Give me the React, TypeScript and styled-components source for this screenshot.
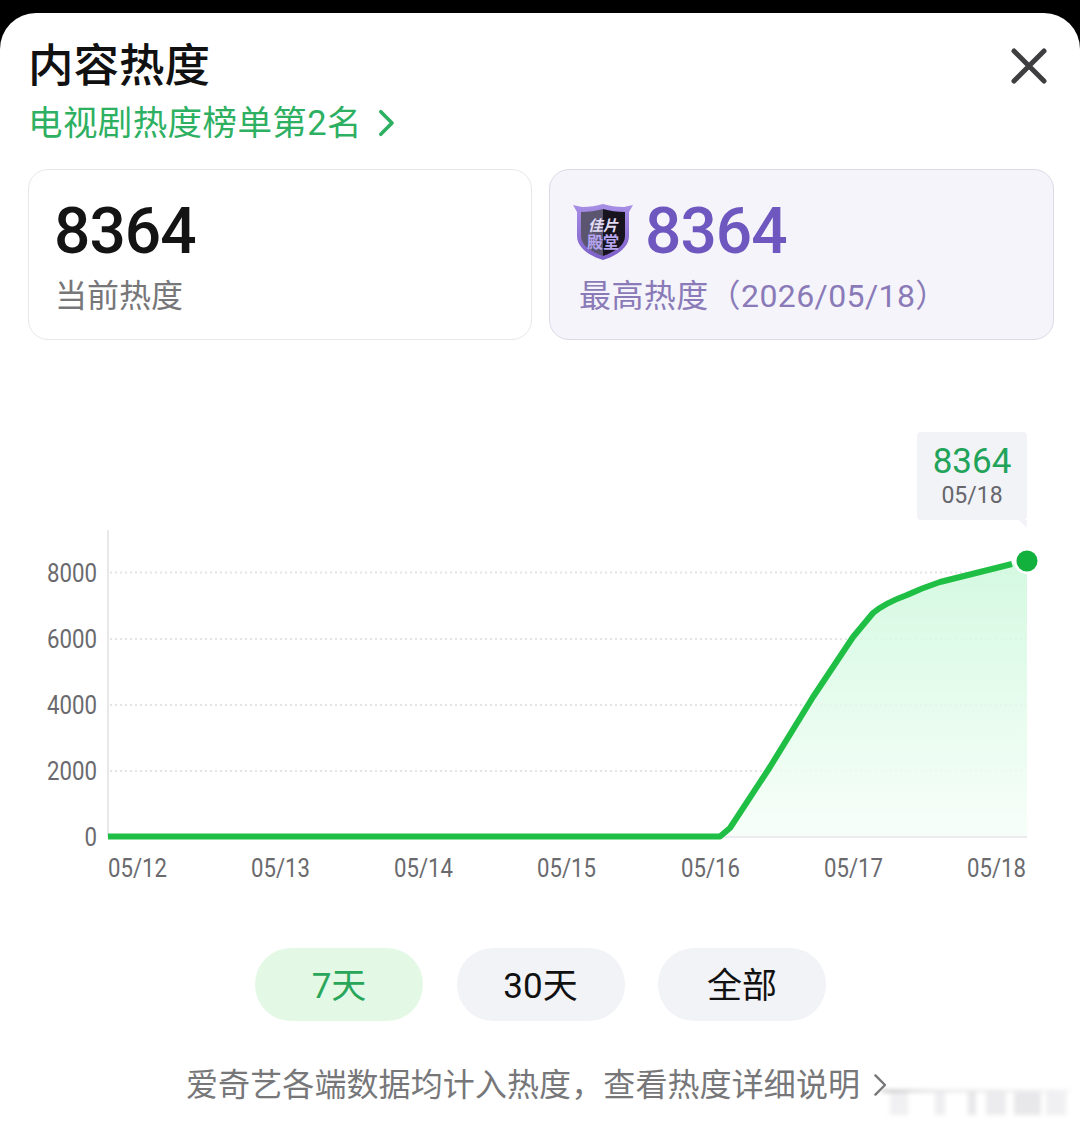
import React from 'react'
import styled, { createGlobalStyle } from 'styled-components'

const SANS = `Roboto, "Noto Sans CJK SC", "Noto Sans", sans-serif`

const GlobalStyle = createGlobalStyle`
    html, body {
        margin: 0;
        padding: 0;
        background: #000;
        font-family: ${SANS};
    }
`

const Page = styled.div`
    width: 1080px;
    height: 1127px;
    padding-top: 13px;
    box-sizing: border-box;
    overflow: hidden;
`

const Sheet = styled.div`
    position: relative;
    height: 1114px;
    background: #fff;
    border-radius: 36px 36px 0 0;
    box-sizing: border-box;
    padding-top: 23px;
`

const Header = styled.div`
    display: flex;
    justify-content: space-between;
    padding: 0 33px 0 28px;
`

const Title = styled.h1`
    margin: 0;
    font-size: 45.5px;
    line-height: 62px;
    font-weight: 500;
    color: #111;
`

const RankLink = styled.div`
    display: flex;
    align-items: center;
    gap: 16px;
    font-size: 34.5px;
    line-height: 48px;
    letter-spacing: 0.4px;
    margin-top: 1px;
    color: #2eb062;
`

const CloseButton = styled.div`
    margin-top: 12px;
    width: 36px;
    height: 36px;
`

const StatRow = styled.div`
    display: grid;
    grid-template-columns: 504px 505px;
    gap: 17px;
    margin: 22px 0 0 28px;
`

const StatCard = styled.div<{ $accent?: boolean }>`
    height: 171px;
    box-sizing: border-box;
    border-radius: 20px;
    border: 1.5px solid ${p => (p.$accent ? '#dcdae6' : '#e8e8ea')};
    background: ${p => (p.$accent ? '#f5f4fa' : '#fff')};
    padding: ${p => (p.$accent ? '29px 0 0 23px' : '29px 0 0 25px')};
`

const StatValue = styled.div<{ $accent?: boolean }>`
    display: flex;
    align-items: center;
    gap: 12px;
    height: 66px;
    font-size: 64px;
    line-height: 66px;
    font-weight: 500;
    letter-spacing: -1px;
    color: ${p => (p.$accent ? '#6f57c0' : '#141414')};
`

const StatLabel = styled.div<{ $accent?: boolean }>`
    margin: 9px 0 0 ${p => (p.$accent ? '6px' : '1px')};
    font-size: 32px;
    line-height: 44px;
    letter-spacing: ${p => (p.$accent ? '0.4px' : '0')};
    color: ${p => (p.$accent ? '#8a7bb8' : '#77777a')};
`

const ChartArea = styled.div`
    position: relative;
    margin-top: 80px;
    height: 470px;
`

const Tooltip = styled.div`
    position: absolute;
    left: 917px;
    top: 12px;
    width: 110px;
    height: 88px;
    background: #f2f3f7;
    border-radius: 4px;
    text-align: center;
    &::after {
        content: '';
        position: absolute;
        right: 0;
        bottom: -8px;
        border-top: 8px solid #f2f3f7;
        border-left: 8px solid transparent;
    }
`

const TooltipValue = styled.div`
    margin-top: 9px;
    font-size: 35px;
    line-height: 42px;
    color: #22a35a;
`

const TooltipDate = styled.div`
    font-size: 23px;
    line-height: 26px;
    color: #66666c;
`

const RangeRow = styled.div`
    display: flex;
    justify-content: center;
    gap: 33.5px;
    margin-top: 58px;
    padding-left: 1px;
`

const RangeButton = styled.div<{ $active?: boolean }>`
    width: 168px;
    height: 73px;
    box-sizing: border-box;
    padding-bottom: 4px;
    border-radius: 36px;
    display: flex;
    align-items: center;
    justify-content: center;
    font-size: 35px;
    color: ${p => (p.$active ? '#2aa65a' : '#111')};
    background: ${p => (p.$active ? '#e3f9e6' : '#f2f3f7')};
`

const Footnote = styled.div`
    display: flex;
    align-items: center;
    margin: 39px 0 0 186px;
    font-size: 32px;
    line-height: 50px;
    letter-spacing: 0.1px;
    color: #77777a;
    gap: 13px;
`

const Watermark = styled.div`
    position: absolute;
    left: 890px;
    top: 1077px;
    width: 180px;
    height: 25px;
    display: flex;
    align-items: stretch;
    filter: blur(2px);
`

const WatermarkBar = styled.span<{ $w: number; $gap: number; $shade: string }>`
    display: block;
    width: ${p => p.$w}px;
    margin-left: ${p => p.$gap}px;
    background: ${p => p.$shade};
`

const WatermarkStreak = styled.span`
    position: absolute;
    left: -8px;
    top: 0;
    width: 188px;
    height: 2px;
    background: linear-gradient(to right, #a8a8aa, #dcdcde 30%, #f0f0f2 100%);
`

const Chevron = ({ size, color, width }: { size: number; color: string; width: number }) => (
    <svg width={size * 0.6} height={size} viewBox="0 0 12 20" fill="none">
        <path d="M2 2l8 8-8 8" stroke={color} strokeWidth={width} strokeLinecap="round" strokeLinejoin="round" />
    </svg>
)

const HallBadge = () => (
    <svg width="60" height="58" viewBox="0 0 60 58">
        <defs>
            <linearGradient id="shieldRim" x1="0" y1="0" x2="0" y2="1">
                <stop offset="0" stopColor="#a88fe6" />
                <stop offset="1" stopColor="#7c5fc8" />
            </linearGradient>
        </defs>
        <path d="M0 2l9 2C17 4 23 3 30 1c7 2 13 3 21 3l9-2-4 7v24c0 12-13 20-26 24C17 53 4 45 4 33V9z" fill="url(#shieldRim)" />
        <path d="M8 9c8 0 15-1 22-3v47C19 49 8 43 8 33z" fill="#5b5570" />
        <path d="M30 6c7 2 14 3 22 3v24c0 10-11 16-22 20z" fill="#17141f" />
        <text x="30" y="28" textAnchor="middle" fontSize="15" fontWeight="700" fontStyle="italic" letterSpacing="0" fill="#e2dcf7">佳片</text>
        <text x="30" y="45" textAnchor="middle" fontSize="16" fontWeight="700" letterSpacing="0" fill="#b5a4ee">殿堂</text>
    </svg>
)

const Y_TICKS = [
    { label: '8000', y: 572.5 },
    { label: '6000', y: 639 },
    { label: '4000', y: 705 },
    { label: '2000', y: 771 },
    { label: '0', y: 837 },
]

const X_TICKS = [
    { label: '05/12', x: 108 },
    { label: '05/13', x: 251 },
    { label: '05/14', x: 394 },
    { label: '05/15', x: 537 },
    { label: '05/16', x: 681 },
    { label: '05/17', x: 824 },
    { label: '05/18', x: 967 },
]

const LINE =
    'M108 836.5L720 836.5L730 828L770 767L813 697L853 637L873 613Q885 603 907 595Q922 588 940 582L980 572L1012 564'

const HeatChart = () => (
    <svg width="1080" height="470" viewBox="0 420 1080 470" style={{ display: 'block' }}>
        <defs>
            <linearGradient id="areaFill" x1="0" y1="0" x2="0" y2="1">
                <stop offset="0" stopColor="#cdf8dc" />
                <stop offset="1" stopColor="#f6fef8" />
            </linearGradient>
        </defs>
        <line x1="108" y1="530" x2="108" y2="837" stroke="#e8e8ea" strokeWidth="2" />
        <line x1="720" y1="837" x2="1027" y2="837" stroke="#ececf0" strokeWidth="2" />
        {Y_TICKS.slice(0, 4).map(t => (
            <line key={t.label} x1="110" y1={t.y} x2="1027" y2={t.y} stroke="#e4e4e6" strokeWidth="2" strokeDasharray="2 3" />
        ))}
        <path d={`${LINE}L1027 560L1027 836L720 836Z`} fill="url(#areaFill)" fillOpacity="0.85" />
        {Y_TICKS.map(t => (
            <text
                key={t.label}
                x="97"
                y={t.y + 9}
                textAnchor="end"
                fontSize="26"
                textLength={t.label.length * 12.5}
                lengthAdjust="spacingAndGlyphs"
                fill="#6a6a6e"
                fontFamily={SANS}
            >
                {t.label}
            </text>
        ))}
        {X_TICKS.map(t => (
            <text
                key={t.label}
                x={t.x}
                y="877"
                fontSize="26"
                textLength="59"
                lengthAdjust="spacingAndGlyphs"
                fill="#6a6a6e"
                fontFamily={SANS}
            >
                {t.label}
            </text>
        ))}
        <path d={LINE} fill="none" stroke="#1fbf45" strokeWidth="6" strokeLinejoin="round" />
        <circle cx="1027" cy="561" r="13" fill="#fff" />
        <circle cx="1027" cy="561" r="10.5" fill="#12b03c" />
    </svg>
)

const App: React.FC = () => (
    <Page>
        <GlobalStyle />
        <Sheet>
            <Header>
                <div>
                    <Title>内容热度</Title>
                    <RankLink>
                        电视剧热度榜单第2名
                        <Chevron size={28} color="#2eb062" width={2.6} />
                    </RankLink>
                </div>
                <CloseButton>
                    <svg width="36" height="36" viewBox="0 0 36 36">
                        <path d="M3 3l30 30M33 3L3 33" stroke="#3e3e40" strokeWidth="5" strokeLinecap="round" />
                    </svg>
                </CloseButton>
            </Header>
            <StatRow>
                <StatCard>
                    <StatValue>8364</StatValue>
                    <StatLabel>当前热度</StatLabel>
                </StatCard>
                <StatCard $accent>
                    <StatValue $accent>
                        <HallBadge />
                        8364
                    </StatValue>
                    <StatLabel $accent>最高热度（2026/05/18）</StatLabel>
                </StatCard>
            </StatRow>
            <ChartArea>
                <HeatChart />
                <Tooltip>
                    <TooltipValue>8364</TooltipValue>
                    <TooltipDate>05/18</TooltipDate>
                </Tooltip>
            </ChartArea>
            <RangeRow>
                <RangeButton $active>7天</RangeButton>
                <RangeButton>30天</RangeButton>
                <RangeButton>全部</RangeButton>
            </RangeRow>
            <Footnote>
                爱奇艺各端数据均计入热度，查看热度详细说明
                <Chevron size={24} color="#77777a" width={2} />
            </Footnote>
            <Watermark>
                <WatermarkBar $w={18} $gap={0} $shade="#f0f0f2" />
                <WatermarkBar $w={10} $gap={27} $shade="#eeeef0" />
                <WatermarkBar $w={8} $gap={23} $shade="#e8e8ea" />
                <WatermarkBar $w={20} $gap={10} $shade="#ececee" />
                <WatermarkBar $w={27} $gap={8} $shade="#e8e8ea" />
                <WatermarkBar $w={20} $gap={5} $shade="#f0f0f2" />
                <WatermarkStreak />
            </Watermark>
        </Sheet>
    </Page>
)

export default App
